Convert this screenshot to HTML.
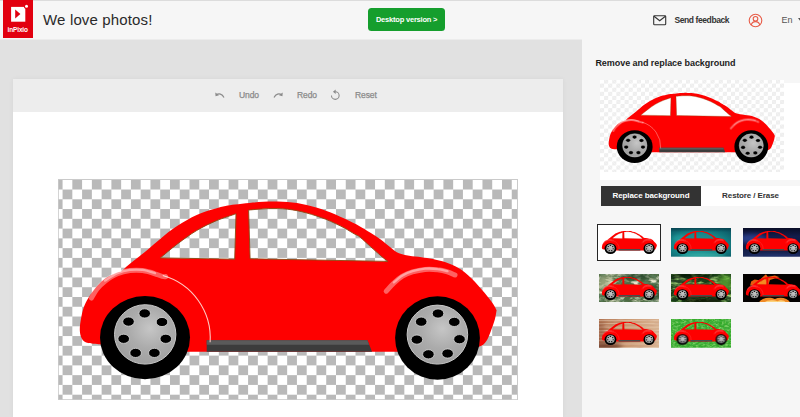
<!DOCTYPE html>
<html lang="en">
<head>
<meta charset="utf-8">
<title>inPixio - Remove and replace background</title>
<style>
*{box-sizing:border-box;margin:0;padding:0}
html,body{width:800px;height:417px;overflow:hidden}
body{background:#e1e1e1;font-family:"Liberation Sans",sans-serif;position:relative;color:#222}
.abs{position:absolute}
#header{left:0;top:0;width:800px;height:39.5px;background:#f6f6f6;border-top:1px solid #dcdcdc;border-bottom:1px solid #ececec}
#logo{left:3px;top:0;width:29.7px;height:37.9px;background:#e2000f}
#logo span{position:absolute;left:0;width:29.4px;top:25.6px;text-align:center;font-size:6.5px;line-height:8px;color:#fff;font-weight:bold;letter-spacing:-0.15px}
#title{left:43.1px;top:9.5px;font-size:15px;letter-spacing:0.14px;color:#2a2a2a;white-space:nowrap;line-height:20px}
#desk{left:368.1px;top:8.1px;width:77px;height:23.2px;background:#159e2d;border-radius:3.5px;color:#fff;letter-spacing:-0.2px;font-size:7.5px;font-weight:bold;text-align:center;line-height:23px;white-space:nowrap}
#feedback{left:674.4px;top:14.7px;font-size:8.5px;letter-spacing:-0.4px;font-weight:bold;color:#333;line-height:10px;white-space:nowrap}
#lang{left:781.6px;top:14.6px;font-size:9px;color:#555;line-height:10px}
#main{left:13px;top:78.5px;width:549.7px;height:339px;background:#fff;box-shadow:0 0 5px rgba(0,0,0,0.05)}
#toolbar{left:13px;top:78.5px;width:549.7px;height:33.3px;background:#ededed}
.tb{top:90px;font-size:8.5px;color:#8a8a8a;letter-spacing:-0.1px;-webkit-text-stroke:0.25px #8a8a8a;line-height:10px;white-space:nowrap}
#side{left:582px;top:39px;width:218px;height:378px;background:#f6f6f6}
#stitle{left:595.4px;top:57px;font-size:9px;letter-spacing:-0.05px;font-weight:bold;color:#1c1c1c;line-height:12px;white-space:nowrap}
#prev{left:600px;top:83px;width:200px;height:97px;background:#fff}
#prevchk{left:599.8px;top:80.2px;width:184px;height:91.8px;background-color:#fff;background-image:linear-gradient(45deg,#eee 25%,transparent 25%,transparent 75%,#eee 75%),linear-gradient(45deg,#eee 25%,transparent 25%,transparent 75%,#eee 75%);background-size:8.2px 8.2px;background-position:0 -0.5px,4.1px 3.6px}
#tab1{left:601px;top:186px;width:100px;height:20.3px;background:#333;color:#fff;letter-spacing:-0.1px;font-size:8px;font-weight:bold;text-align:center;line-height:20px;white-space:nowrap}
#tab2{left:701px;top:186px;width:99px;height:20.3px;background:#fff;color:#333;letter-spacing:-0.1px;font-size:8px;font-weight:bold;text-align:center;line-height:20px;white-space:nowrap}
.th{width:60.6px;height:28.7px;overflow:hidden}
</style>
</head>
<body>
<svg width="0" height="0" style="position:absolute">
<defs>
<pattern id="chk" x="52.8" y="179.75" width="19.53" height="19.54" patternUnits="userSpaceOnUse">
<rect width="19.53" height="19.54" fill="#fff"/>
<rect width="9.765" height="9.77" fill="#b9b9b9"/>
<rect x="9.765" y="9.77" width="9.765" height="9.77" fill="#b9b9b9"/>
</pattern>
<radialGradient id="hub" cx="0.58" cy="0.4" r="0.62">
<stop offset="0" stop-color="#c6c6c6"/><stop offset="0.55" stop-color="#ababab"/><stop offset="1" stop-color="#a0a0a0"/>
</radialGradient>
<linearGradient id="hl1" x1="0" y1="0" x2="1" y2="1">
<stop offset="0" stop-color="#fff" stop-opacity="0.9"/><stop offset="1" stop-color="#fff" stop-opacity="0"/>
</linearGradient>
<filter id="hlb" x="-5%" y="-20%" width="110%" height="140%"><feGaussianBlur stdDeviation="0.7"/></filter>

<mask id="wm" maskUnits="userSpaceOnUse" x="58" y="179" width="460" height="221"><rect x="58" y="179" width="460" height="221" fill="#fff"/><path fill="#000" d="M160.3 257.9 C163.2 255.6 171.4 248.5 177.5 243.9 C183.6 239.3 190.3 234.3 196.7 230.5 C203.1 226.7 209.3 223.7 215.9 220.9 C222.5 218.1 232.7 215.0 236.0 213.8 L234.7 259.2 Z"/><path fill="#000" d="M248.6 210.1 C250.3 209.9 255.5 209.4 258.8 209.2 C262.1 208.9 265.2 208.7 268.4 208.6 C271.6 208.5 274.7 208.5 277.9 208.6 C281.1 208.7 284.3 208.8 287.5 209.2 C290.7 209.5 293.9 210.1 297.1 210.7 C300.3 211.3 303.5 212.1 306.7 213.0 C309.9 213.9 313.1 214.8 316.3 215.9 C319.5 217.0 322.7 218.0 325.9 219.3 C329.1 220.6 332.3 222.1 335.5 223.6 C338.7 225.1 341.8 226.6 345.0 228.3 C348.2 230.1 352.0 232.6 354.6 234.1 C357.2 235.6 357.8 235.3 360.4 237.4 C363.0 239.5 367.1 243.6 370.5 246.6 C373.9 249.6 377.8 253.2 380.7 255.7 C383.6 258.2 386.7 260.4 387.9 261.4 L250.1 258.8 Z"/></mask>
<symbol id="car" viewBox="58 179 459 221" preserveAspectRatio="none">
<path fill="#fe0000" mask="url(#wm)" d="M99.6 344.3 C97.5 344.0 90.0 343.7 87.0 342.7 C84.0 341.7 83.0 340.6 81.8 338.5 C80.6 336.4 79.9 333.3 79.8 330.0 C79.7 326.7 80.3 322.6 81.0 318.8 C81.7 315.0 82.5 310.8 83.7 307.4 C84.9 304.0 86.7 301.0 88.2 298.3 C89.7 295.6 90.9 293.9 92.8 291.4 C94.7 288.9 97.3 285.8 99.6 283.5 C101.9 281.2 103.7 279.5 106.4 277.8 C109.1 276.1 113.1 274.3 115.6 273.2 C118.1 272.1 120.3 271.7 121.3 271.4 C122.7 270.2 126.6 266.5 129.6 264.0 C132.6 261.5 136.0 258.9 139.2 256.4 C142.4 253.8 145.6 251.3 148.8 248.7 C152.0 246.1 155.2 243.3 158.4 240.6 C161.6 237.9 164.7 234.9 167.9 232.4 C171.1 229.9 174.3 227.8 177.5 225.7 C180.7 223.6 183.9 221.7 187.1 219.9 C190.3 218.1 193.5 216.5 196.7 215.1 C199.9 213.7 203.1 212.4 206.3 211.3 C209.5 210.2 212.7 209.3 215.9 208.4 C219.1 207.5 222.3 206.7 225.5 206.1 C228.7 205.5 231.1 205.1 235.0 204.6 C238.9 204.1 245.2 203.4 249.2 203.0 C253.2 202.6 255.6 202.3 258.8 202.1 C262.0 201.8 265.2 201.6 268.4 201.5 C271.6 201.4 274.7 201.4 277.9 201.5 C281.1 201.6 284.3 201.7 287.5 201.9 C290.7 202.2 293.9 202.5 297.1 203.0 C300.3 203.5 303.5 204.2 306.7 205.0 C309.9 205.8 313.1 206.7 316.3 207.6 C319.5 208.5 322.7 209.6 325.9 210.7 C329.1 211.8 332.3 213.1 335.5 214.4 C338.7 215.8 341.8 217.3 345.0 218.8 C348.2 220.3 352.0 222.3 354.6 223.6 C357.2 224.9 357.8 225.3 360.4 226.8 C363.0 228.3 367.1 230.7 370.5 232.8 C373.9 234.9 377.3 237.1 380.7 239.6 C384.1 242.1 387.8 245.5 390.9 247.8 C393.9 250.1 395.9 252.0 399.0 253.3 C402.1 254.6 405.4 255.0 409.2 255.7 C412.9 256.3 417.6 256.6 421.5 257.2 C425.4 257.8 428.8 258.1 432.8 259.0 C436.8 259.9 441.3 260.8 445.6 262.3 C449.9 263.8 454.2 265.4 458.5 268.0 C462.8 270.6 467.0 274.1 471.3 278.2 C475.6 282.2 480.5 288.0 484.1 292.3 C487.7 296.6 490.9 300.8 493.0 303.8 C495.1 306.8 496.0 309.2 496.6 310.3 C496.3 311.8 495.9 315.6 494.9 319.2 C493.9 322.8 491.8 328.6 490.5 332.0 C489.2 335.4 488.5 337.6 487.2 339.7 C485.9 341.8 484.3 343.7 482.8 344.9 C481.3 346.1 478.8 346.6 478.0 347.0 L440 352 L393 351.8 L188 351.8 L145 352 Z"/>
<!-- window outlines -->
<path fill="none" stroke="#8c4a12" stroke-width="0.9" d="M160.3 257.9 C163.2 255.6 171.4 248.5 177.5 243.9 C183.6 239.3 190.3 234.3 196.7 230.5 C203.1 226.7 209.3 223.7 215.9 220.9 C222.5 218.1 232.7 215.0 236.0 213.8 L234.7 259.2 Z"/>
<path fill="none" stroke="#8c4a12" stroke-width="0.9" d="M248.6 210.1 C250.3 209.9 255.5 209.4 258.8 209.2 C262.1 208.9 265.2 208.7 268.4 208.6 C271.6 208.5 274.7 208.5 277.9 208.6 C281.1 208.7 284.3 208.8 287.5 209.2 C290.7 209.5 293.9 210.1 297.1 210.7 C300.3 211.3 303.5 212.1 306.7 213.0 C309.9 213.9 313.1 214.8 316.3 215.9 C319.5 217.0 322.7 218.0 325.9 219.3 C329.1 220.6 332.3 222.1 335.5 223.6 C338.7 225.1 341.8 226.6 345.0 228.3 C348.2 230.1 352.0 232.6 354.6 234.1 C357.2 235.6 357.8 235.3 360.4 237.4 C363.0 239.5 367.1 243.6 370.5 246.6 C373.9 249.6 377.8 253.2 380.7 255.7 C383.6 258.2 386.7 260.4 387.9 261.4 L250.1 258.8 Z"/>
<!-- sill -->
<path d="M206.7 340.2 L367.5 340.2 L372 351.8 L206.7 351.8 Z" fill="#3c3c3c"/>
<path d="M206.7 340.2 L367.5 340.2 L369.2 344.8 L206.7 344.8 Z" fill="#5a5a5a"/>
<!-- highlights -->
<path d="M162.8 275.5 A64.9 64.9 0 0 1 210.1 342.2" fill="none" stroke="#ffc9c2" stroke-width="1.1"/>
<g fill="none" stroke="#fff" stroke-linecap="round" filter="url(#hlb)">
<path d="M91.5 298.0 C92.4 296.5 94.8 291.8 97.0 289.0 C99.2 286.2 101.6 283.8 105.0 281.2 C108.4 278.7 113.3 275.5 117.5 273.8 C121.7 272.0 125.8 271.1 130.0 270.6 C134.2 270.1 138.3 270.1 142.5 270.6 C146.7 271.1 151.2 272.5 155.0 273.8 C158.8 275.0 163.3 277.5 165.6 276.6" stroke-width="5" opacity="0.38"/><path d="M105.0 280.6 C107.1 279.3 113.3 274.8 117.5 273.1 C121.7 271.3 125.8 270.4 130.0 269.9 C134.2 269.4 138.3 269.4 142.5 269.9 C146.7 270.4 152.9 272.5 155.0 273.1" stroke-width="2.3" opacity="0.42"/>
<path d="M386.2 291.2 C387.5 289.9 391.0 285.6 393.8 283.1 C396.5 280.6 399.4 278.1 402.5 276.2 C405.6 274.4 408.8 273.0 412.5 271.9 C416.2 270.8 420.8 269.8 425.0 269.4 C429.2 269.0 433.8 269.3 437.5 269.8 C441.2 270.2 444.6 271.0 447.5 271.9 C450.4 272.8 453.8 274.5 455.0 275.0" stroke-width="5" opacity="0.38"/><path d="M393.8 282.4 C395.2 281.3 399.4 277.4 402.5 275.6 C405.6 273.7 408.8 272.3 412.5 271.2 C416.2 270.1 420.8 269.1 425.0 268.7 C429.2 268.3 433.8 268.6 437.5 269.1 C441.2 269.5 445.8 270.8 447.5 271.2" stroke-width="2.3" opacity="0.42"/>
</g>
<!-- rear wheel -->
<ellipse cx="145" cy="337.6" rx="45" ry="41.6" fill="#000"/>
<ellipse cx="145.2" cy="334.4" rx="30.7" ry="29.7" fill="url(#hub)" stroke="#c8c8c8" stroke-width="1"/>
<g fill="#000" stroke="#dcdcdc" stroke-width="0.8">
<ellipse cx="144.7" cy="313.4" rx="5.8" ry="4.6"/><ellipse cx="162" cy="322" rx="5.8" ry="4.6"/><ellipse cx="165.8" cy="338.8" rx="5.8" ry="4.6"/><ellipse cx="154.4" cy="352.9" rx="5.8" ry="4.6"/><ellipse cx="135.6" cy="352.9" rx="5.8" ry="4.6"/><ellipse cx="123.7" cy="338.8" rx="5.8" ry="4.6"/><ellipse cx="128.5" cy="321.6" rx="5.8" ry="4.6"/>
</g>
<!-- front wheel -->
<ellipse cx="437.5" cy="338" rx="42.4" ry="41.8" fill="#000"/>
<ellipse cx="437.4" cy="334.6" rx="30.3" ry="29.5" fill="url(#hub)" stroke="#c8c8c8" stroke-width="1"/>
<g fill="#000" stroke="#dcdcdc" stroke-width="0.8">
<ellipse cx="438.0" cy="313.5" rx="5.8" ry="4.6"/><ellipse cx="454.3" cy="321.9" rx="5.8" ry="4.6"/><ellipse cx="459.5" cy="339.2" rx="5.8" ry="4.6"/><ellipse cx="447.6" cy="353.5" rx="5.8" ry="4.6"/><ellipse cx="428.4" cy="354.3" rx="5.8" ry="4.6"/><ellipse cx="416.9" cy="339.6" rx="5.8" ry="4.6"/><ellipse cx="421.2" cy="321.7" rx="5.8" ry="4.6"/>
</g>
</symbol>
</defs>
</svg>

<div id="header" class="abs"></div>
<div id="logo" class="abs">
<svg class="abs" style="left:0;top:0" width="29" height="37" viewBox="0 0 29 37"><rect x="8.1" y="6.9" width="14.2" height="14.8" fill="#fff"/><path d="M12.2 9.6 L17.4 14.1 L12.2 18.6 Z" fill="#e2000f"/><circle cx="23.5" cy="6.2" r="2.6" fill="#e2000f"/><circle cx="23.5" cy="6.2" r="1.5" fill="#fff"/></svg>
<span>inPixio</span></div>
<div id="title" class="abs">We love photos!</div>
<div id="desk" class="abs">Desktop version &gt;</div>
<svg class="abs" style="left:652.6px;top:15px" width="14" height="11" viewBox="0 0 14 11"><rect x="0.7" y="0.7" width="12" height="9" rx="0.8" fill="none" stroke="#333" stroke-width="1.1"/><path d="M1 1.2 L6.7 5.8 L12.4 1.2" fill="none" stroke="#333" stroke-width="1.1"/></svg>
<div id="feedback" class="abs">Send feedback</div>
<svg class="abs" style="left:748px;top:12.7px" width="15" height="15" viewBox="0 0 15 15"><circle cx="7.5" cy="7.5" r="6.3" fill="none" stroke="#e85c48" stroke-width="1.1"/><circle cx="7.5" cy="5.8" r="2.3" fill="none" stroke="#e85c48" stroke-width="1.1"/><path d="M3.2 12 C3.8 9.3 5.5 8.6 7.5 8.6 C9.5 8.6 11.2 9.3 11.8 12" fill="none" stroke="#e85c48" stroke-width="1.1"/></svg>
<div id="lang" class="abs">En</div>
<svg class="abs" style="left:797.5px;top:17.5px" width="6" height="5" viewBox="0 0 6 5"><path d="M0 0 L6 0 L3 4 Z" fill="#555"/></svg>

<div id="main" class="abs"></div>
<div id="toolbar" class="abs"></div>
<svg class="abs" style="left:214.6px;top:91.6px" width="10" height="6.6" viewBox="0 0 12 8"><path d="M1.5 3.4 C4.5 1.4 8.6 2 10.8 6.6" fill="none" stroke="#8a8a8a" stroke-width="1.5"/><path d="M0.3 0.6 L0.6 5.2 L4.8 4 Z" fill="#8a8a8a"/></svg>
<div class="abs tb" style="left:239px">Undo</div>
<svg class="abs" style="left:272.8px;top:91.6px" width="10" height="6.6" viewBox="0 0 12 8"><path d="M10.5 3.4 C7.5 1.4 3.4 2 1.2 6.6" fill="none" stroke="#8a8a8a" stroke-width="1.5"/><path d="M11.7 0.6 L11.4 5.2 L7.2 4 Z" fill="#8a8a8a"/></svg>
<div class="abs tb" style="left:297px">Redo</div>
<svg class="abs" style="left:330px;top:89.4px" width="10.6" height="11.6" viewBox="0 0 13 14"><path d="M6.5 3.2 A4.7 4.7 0 1 1 1.8 7.9" fill="none" stroke="#8a8a8a" stroke-width="1.3"/><path d="M7 0.4 L3.6 3.2 L7 6 Z" fill="#8a8a8a"/></svg>
<div class="abs tb" style="left:355px">Reset</div>

<!-- main canvas -->
<svg class="abs" style="left:58px;top:179px" width="460" height="221" viewBox="58 179 460 221">
<rect x="58" y="179" width="460" height="221" fill="url(#chk)"/>
<rect x="58.3" y="179.5" width="459.2" height="220.2" fill="none" stroke="#cacaca" stroke-width="1"/>
<use href="#car" x="58" y="179" width="459" height="221"/>
</svg>

<div id="side" class="abs"></div>
<div id="stitle" class="abs">Remove and replace background</div>
<div id="prev" class="abs"></div>
<div id="prevchk" class="abs"></div>
<svg class="abs" style="left:600px;top:83.6px" width="183" height="87.3" viewBox="58 179 460 221" preserveAspectRatio="none">
<path fill="#fff" d="M160.3 257.9 C163.2 255.6 171.4 248.5 177.5 243.9 C183.6 239.3 190.3 234.3 196.7 230.5 C203.1 226.7 209.3 223.7 215.9 220.9 C222.5 218.1 232.7 215.0 236.0 213.8 L234.7 259.2 Z"/><path fill="#fff" d="M248.6 210.1 C250.3 209.9 255.5 209.4 258.8 209.2 C262.1 208.9 265.2 208.7 268.4 208.6 C271.6 208.5 274.7 208.5 277.9 208.6 C281.1 208.7 284.3 208.8 287.5 209.2 C290.7 209.5 293.9 210.1 297.1 210.7 C300.3 211.3 303.5 212.1 306.7 213.0 C309.9 213.9 313.1 214.8 316.3 215.9 C319.5 217.0 322.7 218.0 325.9 219.3 C329.1 220.6 332.3 222.1 335.5 223.6 C338.7 225.1 341.8 226.6 345.0 228.3 C348.2 230.1 352.0 232.6 354.6 234.1 C357.2 235.6 357.8 235.3 360.4 237.4 C363.0 239.5 367.1 243.6 370.5 246.6 C373.9 249.6 377.8 253.2 380.7 255.7 C383.6 258.2 386.7 260.4 387.9 261.4 L250.1 258.8 Z"/>
<use href="#car" x="58" y="179" width="460" height="221"/>
</svg>
<div id="tab1" class="abs">Replace background</div>
<div id="tab2" class="abs">Restore / Erase</div>

<!-- thumbnails -->
<svg width="0" height="0" style="position:absolute"><defs>
<filter id="nzPale" x="0" y="0" width="100%" height="100%"><feTurbulence type="fractalNoise" baseFrequency="0.016 0.03" numOctaves="3" seed="7"/><feColorMatrix type="matrix" values="0 0 0 0 0.80  0 0 0 0 0.80  0 0 0 0 0.62  3.4 0 0 0 -1.5"/></filter>
<filter id="nzDark" x="0" y="0" width="100%" height="100%"><feTurbulence type="fractalNoise" baseFrequency="0.02 0.035" numOctaves="3" seed="3"/><feColorMatrix type="matrix" values="0 0 0 0 0.10  0 0 0 0 0.20  0 0 0 0 0.10  0 3.4 0 0 -1.5"/></filter>
<filter id="nzLeaf" x="0" y="0" width="100%" height="100%"><feTurbulence type="fractalNoise" baseFrequency="0.014 0.03" numOctaves="3" seed="11"/><feColorMatrix type="matrix" values="0 0 0 0 0.36  0 0 0 0 0.64  0 0 0 0 0.18  0 3.4 0 0 -1.5"/></filter>
<filter id="nzLeafD" x="0" y="0" width="100%" height="100%"><feTurbulence type="fractalNoise" baseFrequency="0.012 0.04" numOctaves="2" seed="23"/><feColorMatrix type="matrix" values="0 0 0 0 0.02  0 0 0 0 0.06  0 0 0 0 0.02  3.4 0 0 0 -1.5"/></filter>
<filter id="nzGrassL" x="0" y="0" width="100%" height="100%"><feTurbulence type="fractalNoise" baseFrequency="0.045 0.07" numOctaves="2" seed="5"/><feColorMatrix type="matrix" values="0 0 0 0 0.42  0 0 0 0 0.80  0 0 0 0 0.25  0 0 1.8 0 -0.75"/></filter>
<filter id="nzGrassD" x="0" y="0" width="100%" height="100%"><feTurbulence type="fractalNoise" baseFrequency="0.04 0.07" numOctaves="2" seed="9"/><feColorMatrix type="matrix" values="0 0 0 0 0.08  0 0 0 0 0.45  0 0 0 0 0.08  1.8 0 0 0 -0.75"/></filter>
<filter id="nzBrick" x="0" y="0" width="100%" height="100%"><feTurbulence type="fractalNoise" baseFrequency="0.012 0.06" numOctaves="2" seed="8"/><feColorMatrix type="matrix" values="0 0 0 0 0.62  0 0 0 0 0.36  0 0 0 0 0.24  3 0 0 0 -1.3"/></filter>
<filter id="nzFire" x="0" y="0" width="100%" height="100%"><feTurbulence type="fractalNoise" baseFrequency="0.02 0.03" numOctaves="2" seed="4"/><feColorMatrix type="matrix" values="0 0 0 0 1  0 0 0 0 0.78  0 0 0 0 0.3  0 3 0 0 -1.3"/></filter>
<filter id="bl6" x="-20%" y="-40%" width="140%" height="180%"><feGaussianBlur stdDeviation="6"/></filter>
<filter id="bl12" x="-30%" y="-60%" width="160%" height="220%"><feGaussianBlur stdDeviation="12"/></filter>
<filter id="bl20" x="-40%" y="-80%" width="180%" height="260%"><feGaussianBlur stdDeviation="20"/></filter>
<radialGradient id="teal" cx="0.45" cy="0.6" r="0.75"><stop offset="0" stop-color="#219e9d"/><stop offset="0.55" stop-color="#178789"/><stop offset="1" stop-color="#0b5563"/></radialGradient>
<linearGradient id="tealTop" x1="0" y1="0" x2="0" y2="1"><stop offset="0" stop-color="#07414e" stop-opacity="0.85"/><stop offset="0.14" stop-color="#07414e" stop-opacity="0"/></linearGradient>
<linearGradient id="navy" x1="0" y1="0" x2="0" y2="1"><stop offset="0" stop-color="#090d26"/><stop offset="0.3" stop-color="#131d4c"/><stop offset="0.6" stop-color="#10183d"/><stop offset="1" stop-color="#1a2858"/></linearGradient>
<linearGradient id="brick" x1="0" y1="0" x2="1" y2="0"><stop offset="0" stop-color="#b07452"/><stop offset="0.5" stop-color="#cb9872"/><stop offset="1" stop-color="#dab694"/></linearGradient>
<pattern id="mortar" x="58" y="186" width="90" height="26" patternUnits="userSpaceOnUse"><rect width="90" height="7" fill="#e6cbb0" opacity="0.75"/></pattern>
<clipPath id="tc"><rect x="58" y="179" width="460" height="221"/></clipPath>
</defs></svg>
<div class="abs" style="left:597px;top:224px;width:64px;height:37.2px;background:#fff;border:1px solid #262626"></div>
<svg class="abs th" style="left:598.8px;top:228.2px" viewBox="58 179 460 221" preserveAspectRatio="none"><rect x="58" y="179" width="460" height="221" fill="#fff"/><use href="#car" x="58" y="179" width="460" height="221"/></svg>
<svg class="abs th" style="left:670.9px;top:228.2px" viewBox="58 179 460 221" preserveAspectRatio="none"><rect x="58" y="179" width="460" height="221" fill="url(#teal)"/><rect x="58" y="179" width="460" height="221" fill="url(#tealTop)"/><g clip-path="url(#tc)"><ellipse cx="300" cy="388" rx="170" ry="14" fill="#4cc6b8" opacity="0.55" filter="url(#bl12)"/><ellipse cx="120" cy="260" rx="50" ry="30" fill="#2fb0b0" opacity="0.35" filter="url(#bl12)"/></g><use href="#car" x="58" y="179" width="460" height="221"/></svg>
<svg class="abs th" style="left:743.1px;top:228.2px" viewBox="58 179 460 221" preserveAspectRatio="none"><rect x="58" y="179" width="460" height="221" fill="url(#navy)"/><g clip-path="url(#tc)"><ellipse cx="130" cy="262" rx="110" ry="34" fill="#3650a8" opacity="0.7" filter="url(#bl20)"/><ellipse cx="300" cy="392" rx="200" ry="12" fill="#2c3f86" opacity="0.6" filter="url(#bl12)"/></g><use href="#car" x="58" y="179" width="460" height="221"/></svg>
<svg class="abs th" style="left:598.8px;top:273.7px" viewBox="58 179 460 221" preserveAspectRatio="none"><rect x="58" y="179" width="460" height="221" fill="#4d6a42"/><rect x="58" y="179" width="460" height="221" filter="url(#nzDark)"/><rect x="58" y="179" width="460" height="221" filter="url(#nzPale)"/><g clip-path="url(#tc)"><ellipse cx="110" cy="250" rx="70" ry="60" fill="#c8c8a2" opacity="0.6" filter="url(#bl20)"/><ellipse cx="330" cy="200" rx="110" ry="26" fill="#1f3d22" opacity="0.7" filter="url(#bl12)"/><ellipse cx="480" cy="330" rx="40" ry="60" fill="#24452a" opacity="0.6" filter="url(#bl12)"/></g><use href="#car" x="58" y="179" width="460" height="221"/></svg>
<svg class="abs th" style="left:670.9px;top:273.7px" viewBox="58 179 460 221" preserveAspectRatio="none"><rect x="58" y="179" width="460" height="221" fill="#173c16"/><rect x="58" y="179" width="460" height="221" filter="url(#nzLeaf)"/><rect x="58" y="179" width="460" height="221" filter="url(#nzLeafD)"/><g clip-path="url(#tc)"><ellipse cx="200" cy="190" rx="170" ry="16" fill="#050a04" opacity="0.85" filter="url(#bl12)"/><ellipse cx="470" cy="250" rx="55" ry="70" fill="#5aa632" opacity="0.8" filter="url(#bl20)"/><ellipse cx="300" cy="385" rx="160" ry="18" fill="#071006" opacity="0.75" filter="url(#bl12)"/></g><use href="#car" x="58" y="179" width="460" height="221"/></svg>
<svg class="abs th" style="left:743.1px;top:273.7px" viewBox="58 179 460 221" preserveAspectRatio="none"><rect x="58" y="179" width="460" height="221" fill="#040201"/><g clip-path="url(#tc)"><g filter="url(#bl6)"><path d="M112 268 L120 236 L146 222 L182 228 L206 204 L232 181 L246 200 L270 196 L300 190 L336 204 L300 214 L262 226 L250 268 Z" fill="#e85a10"/><path d="M150 262 L168 238 L200 236 L222 214 L236 232 L246 262 Z" fill="#f58a22"/><path d="M176 400 C200 362 260 352 300 372 C340 352 395 362 418 400 Z" fill="#f08a28"/><path d="M215 400 C240 378 290 376 320 388 C345 376 370 382 385 400 Z" fill="#fdd27a"/></g></g><use href="#car" x="58" y="179" width="460" height="221"/></svg>
<svg class="abs th" style="left:598.8px;top:319.1px" viewBox="58 179 460 221" preserveAspectRatio="none"><rect x="58" y="179" width="460" height="221" fill="url(#brick)"/><rect x="58" y="179" width="460" height="221" fill="url(#mortar)"/><rect x="58" y="179" width="460" height="221" filter="url(#nzBrick)" opacity="0.6"/><g clip-path="url(#tc)"><ellipse cx="110" cy="395" rx="120" ry="40" fill="#5e3324" opacity="0.7" filter="url(#bl20)"/><ellipse cx="70" cy="280" rx="30" ry="90" fill="#8a4e34" opacity="0.5" filter="url(#bl20)"/></g><use href="#car" x="58" y="179" width="460" height="221"/></svg>
<svg class="abs th" style="left:670.9px;top:319.1px" viewBox="58 179 460 221" preserveAspectRatio="none"><rect x="58" y="179" width="460" height="221" fill="#33aa2a"/><rect x="58" y="179" width="460" height="221" filter="url(#nzGrassL)"/><rect x="58" y="179" width="460" height="221" filter="url(#nzGrassD)"/><use href="#car" x="58" y="179" width="460" height="221"/></svg>
</body>
</html>
